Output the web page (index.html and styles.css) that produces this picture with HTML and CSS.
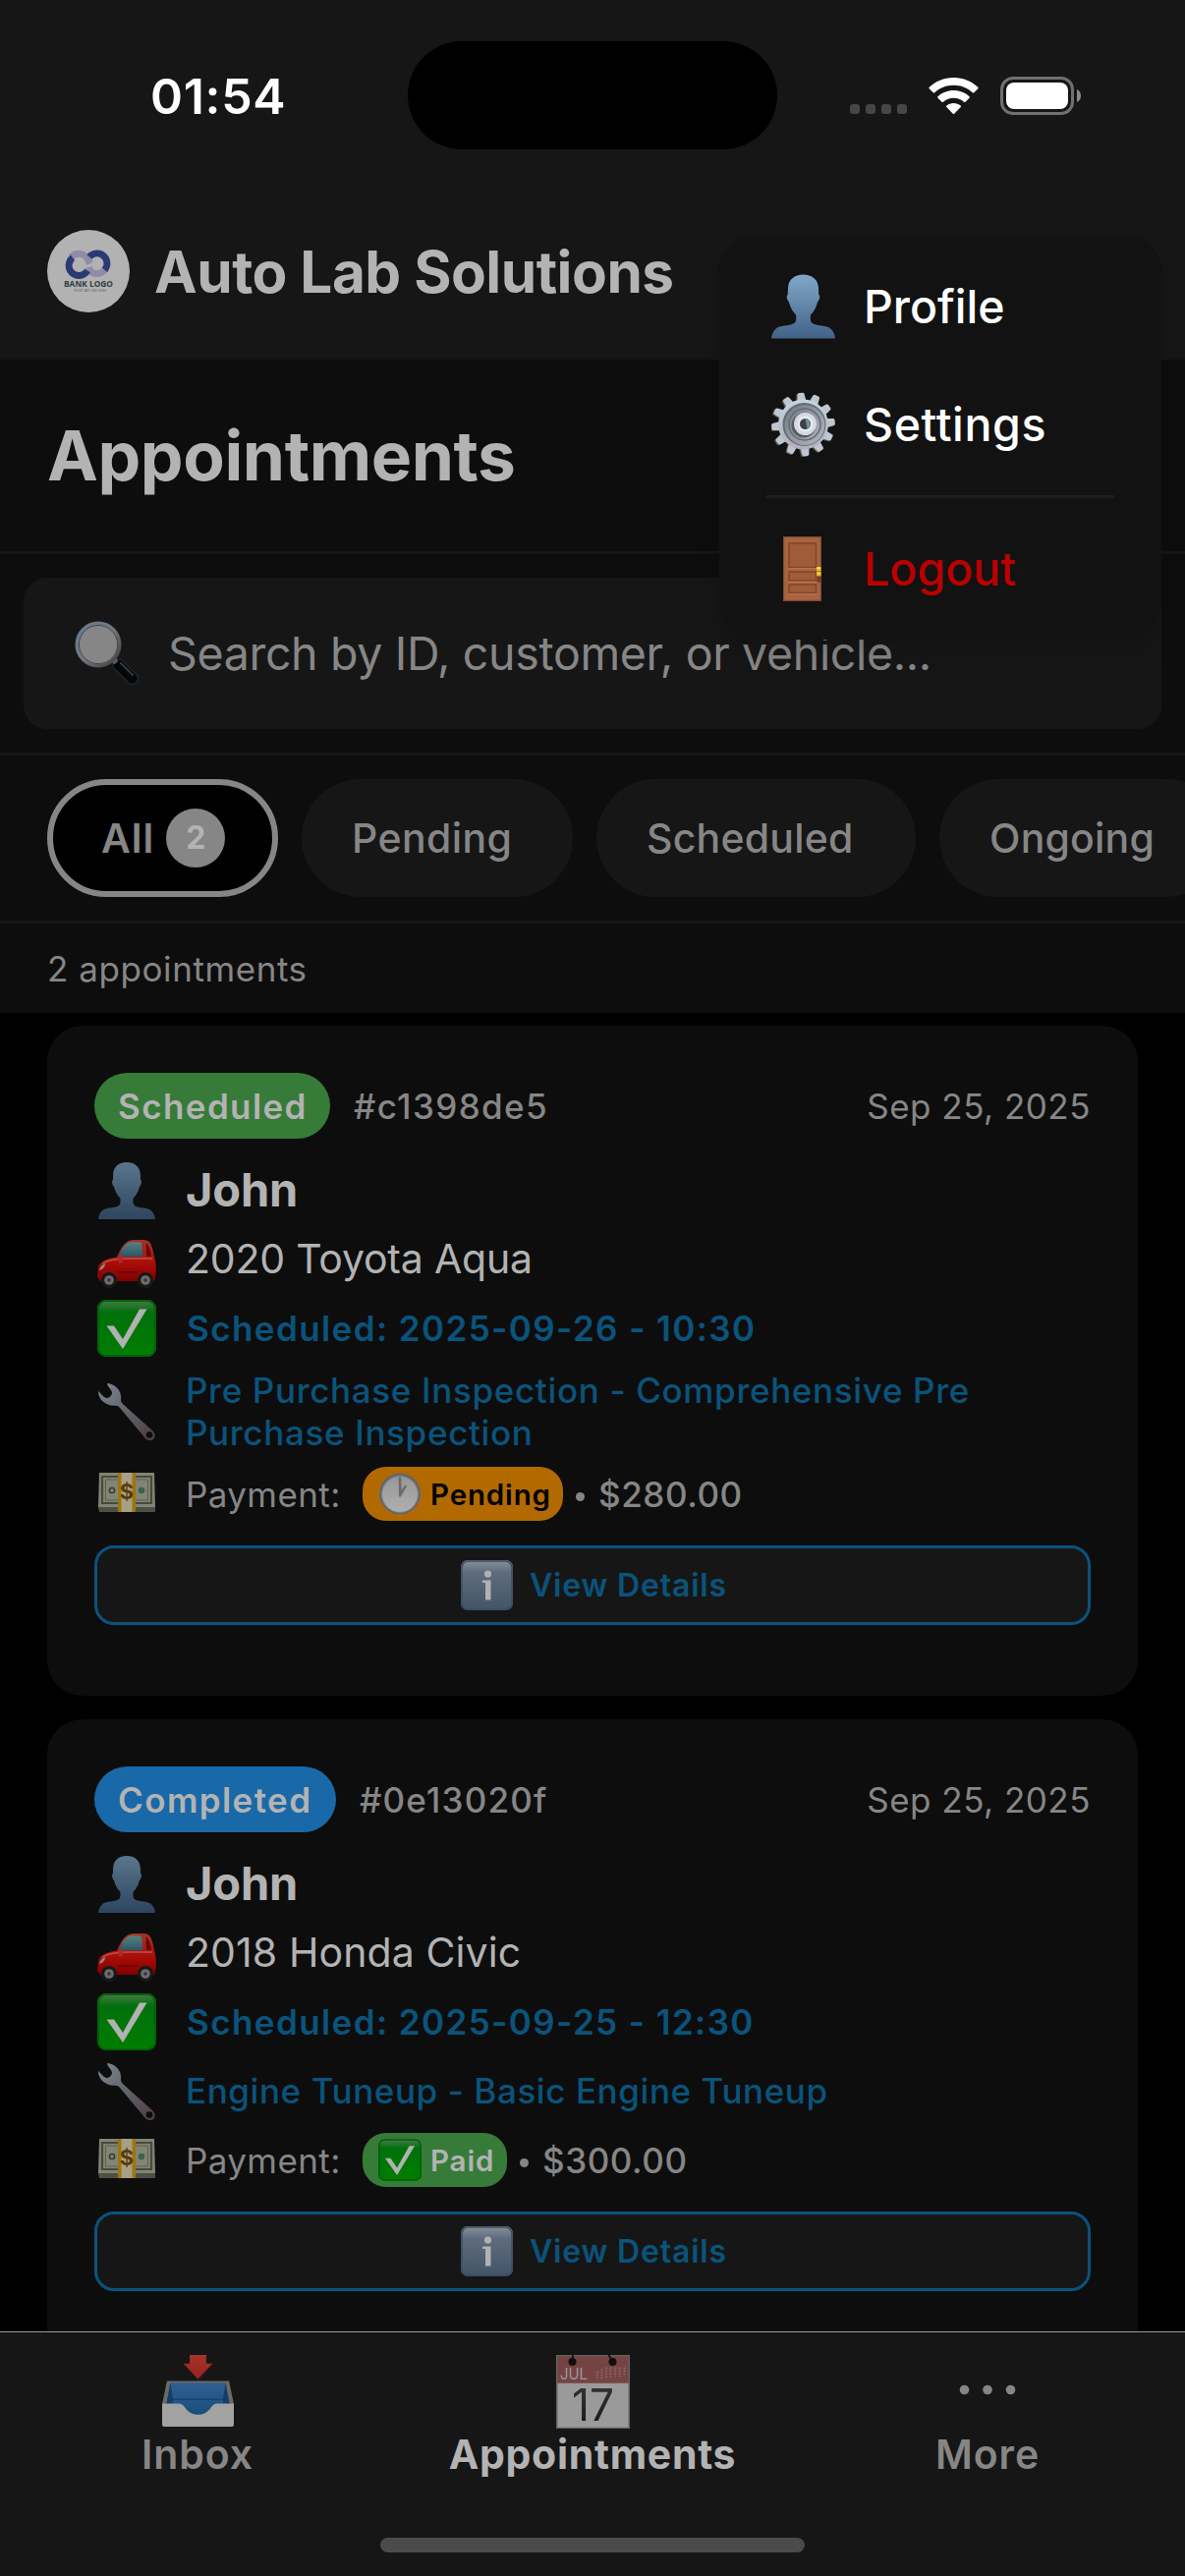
FILE: index.html
```html
<!DOCTYPE html>
<html lang="en">
<head>
<meta charset="utf-8">
<title>Auto Lab Solutions</title>
<link rel="stylesheet" href="styles.css">
</head>
<body>
<svg class="sprite" aria-hidden="true">
  <defs>
    <linearGradient id="g-person" x1="0" y1="0" x2="0" y2="1"><stop offset="0" stop-color="#80a8c8"/><stop offset="1" stop-color="#426288"/></linearGradient>
    <linearGradient id="g-gear" x1="0" y1="0" x2="0" y2="1"><stop offset="0" stop-color="#c6d3de"/><stop offset="1" stop-color="#b3aebb"/></linearGradient>
    <linearGradient id="g-gear-in" x1="0" y1="0" x2="1" y2="1"><stop offset="0" stop-color="#6f7880"/><stop offset="1" stop-color="#b4b9c2"/></linearGradient>
    <linearGradient id="g-check" x1="0" y1="0" x2="0" y2="1"><stop offset="0" stop-color="#6fae6f"/><stop offset=".22" stop-color="#00a010"/><stop offset="1" stop-color="#00b400"/></linearGradient>
    <linearGradient id="g-info" x1="0" y1="0" x2="0" y2="1"><stop offset="0" stop-color="#c2ccd8"/><stop offset=".25" stop-color="#8799b5"/><stop offset="1" stop-color="#5f7893"/></linearGradient>
    <linearGradient id="g-wrench" x1="0" y1="0" x2="1" y2="1"><stop offset="0" stop-color="#b2bfcd"/><stop offset=".5" stop-color="#8b8c98"/><stop offset="1" stop-color="#6a5558"/></linearGradient>
    <linearGradient id="g-car" x1="0" y1="0" x2="0" y2="1"><stop offset="0" stop-color="#e84a3c"/><stop offset=".5" stop-color="#fa1610"/><stop offset="1" stop-color="#b80000"/></linearGradient>
    <linearGradient id="g-glass" x1="0" y1="0" x2="0" y2="1"><stop offset="0" stop-color="#7db8b8"/><stop offset="1" stop-color="#3e7a92"/></linearGradient>
    <linearGradient id="g-rim" x1="0" y1="0" x2="1" y2="1"><stop offset="0" stop-color="#8fb2d6"/><stop offset=".5" stop-color="#a3a9b3"/><stop offset="1" stop-color="#5c4f4a"/></linearGradient>
    <linearGradient id="g-clock" x1="0" y1="0" x2="0" y2="1"><stop offset="0" stop-color="#d8d8d8"/><stop offset="1" stop-color="#fafafa"/></linearGradient>
    <linearGradient id="g-tray" x1="0" y1="0" x2="0" y2="1"><stop offset="0" stop-color="#4a88cf"/><stop offset="1" stop-color="#1c6cab"/></linearGradient>
    <linearGradient id="g-arrow" x1="0" y1="0" x2="0" y2="1"><stop offset="0" stop-color="#ee4b3e"/><stop offset="1" stop-color="#d53128"/></linearGradient>
    <linearGradient id="g-ink" x1="0" y1="0" x2="0" y2="1"><stop offset="0" stop-color="#505050"/><stop offset="1" stop-color="#1e1e1e"/></linearGradient>
  </defs>

  <symbol id="i-person" viewBox="0 0 65 65">
    <path fill="url(#g-person)" d="M32.500 0C41 0 48 5 48 14l.3 6.500c1.700.5 1 5.500-1.300 7.500-1.500 6-4 10-7 13-.5 3-.5 6.500 1 8 4 3.500 11.500 2 18 5 4 3 5.500 6.500 6 11H0c.5-4.500 2-8 6-11 6.500-3 14-1.500 18-5 1.500-1.500 1.500-5 1-8-3-3-5.500-7-7-13-2.300-2-3-7-1.300-7.500L17 14C17 5 24 0 32.500 0z"/>
  </symbol>

  <symbol id="i-gear" viewBox="0 0 65 65">
    <g fill="#5d5648" transform="translate(-1.300 .8)">
      <path id="tooth" d="M28.500 9l.8-7.500Q29.500.2 31 .2h3.500q1.500 0 1.800 1.300L37.500 9z" transform="rotate(-5 32.500 32.500)"/>
      <use href="#tooth" transform="rotate(30 32.500 32.500)"/><use href="#tooth" transform="rotate(60 32.500 32.500)"/><use href="#tooth" transform="rotate(90 32.500 32.500)"/><use href="#tooth" transform="rotate(120 32.500 32.500)"/><use href="#tooth" transform="rotate(150 32.500 32.500)"/><use href="#tooth" transform="rotate(180 32.500 32.500)"/><use href="#tooth" transform="rotate(210 32.500 32.500)"/><use href="#tooth" transform="rotate(240 32.500 32.500)"/><use href="#tooth" transform="rotate(270 32.500 32.500)"/><use href="#tooth" transform="rotate(300 32.500 32.500)"/><use href="#tooth" transform="rotate(330 32.500 32.500)"/>
    </g>
    <g fill="#bcc7d2">
      <path id="tooth2" d="M28.500 9l.8-7.500Q29.500.2 31 .2h3.500q1.500 0 1.800 1.300L37.500 9z" transform="rotate(-5 32.500 32.500)"/>
      <use href="#tooth2" transform="rotate(30 32.500 32.500)"/><use href="#tooth2" transform="rotate(60 32.500 32.500)"/><use href="#tooth2" transform="rotate(90 32.500 32.500)"/><use href="#tooth2" transform="rotate(120 32.500 32.500)"/><use href="#tooth2" transform="rotate(150 32.500 32.500)"/><use href="#tooth2" transform="rotate(180 32.500 32.500)"/><use href="#tooth2" transform="rotate(210 32.500 32.500)"/><use href="#tooth2" transform="rotate(240 32.500 32.500)"/><use href="#tooth2" transform="rotate(270 32.500 32.500)"/><use href="#tooth2" transform="rotate(300 32.500 32.500)"/><use href="#tooth2" transform="rotate(330 32.500 32.500)"/>
    </g>
    <circle cx="32.500" cy="32.500" r="25.500" fill="url(#g-gear)"/>
    <circle cx="33.500" cy="32.500" r="22" fill="#626a72"/>
    <circle cx="34" cy="33" r="20.500" fill="url(#g-gear-in)"/>
    <circle cx="34" cy="32.500" r="16" fill="none" stroke="#646b73" stroke-width="1.500"/>
    <circle cx="33" cy="33.500" r="12.500" fill="#5c5a60"/>
    <circle cx="34.500" cy="32" r="11.500" fill="#d3d8e2"/>
    <circle cx="34.500" cy="32" r="8" fill="#e6ebf2"/>
    <circle cx="34.500" cy="32" r="5.500" fill="#3b4248"/>
    <path d="M34.500 26.500a5.500 5.500 0 0 1 2 10.500z" fill="#778b94"/>
  </symbol>

  <symbol id="i-door" viewBox="0 0 39 66">
    <path fill="#a86341" d="M0 0h39v66H0z"/>
    <path fill="none" stroke="#824a2d" stroke-width="1.200" d="M.6.600h37.800v64.800H.6z"/>
    <path fill="#a05b39" stroke="#7f452a" stroke-width="1.400" d="M6 7h27.500v24.500H6zM6 36h27.500v9H6zM6 49h27.500v8.500H6z"/>
    <path stroke="#c27a55" stroke-width="1" d="M5 32.800h29.500M5 46.300h29.500M5 58.800h29.500" fill="none"/>
    <path fill="#6e3d22" d="M34.500 40.500h4v6h-4z"/>
    <path fill="#e8b923" d="M34 31h4.600v4.300H34zM34 36.300h4.600v3.900H34z"/>
    <path fill="#ffe75a" d="M34.500 31.500h3v1.500h-3zM34.500 36.800h3v1.300h-3z"/>
  </symbol>

  <symbol id="i-search" viewBox="0 0 66 66">
    <path stroke="#35404b" stroke-width="12.500" stroke-linecap="round" d="M44.500 44.500l14 14"/>
    <path stroke="#05080b" stroke-width="10.500" stroke-linecap="round" d="M44.500 44.500l14 14"/>
    <path stroke="#46505a" stroke-width="2.200" stroke-linecap="round" d="M47 43l12 12"/>
    <path stroke="#8a8078" stroke-width="6" d="M38.500 38.500l4 4"/>
    <circle cx="24" cy="24" r="21.800" fill="#c0c0c0" stroke="url(#g-rim)" stroke-width="3.400"/>
    <circle cx="24" cy="24" r="19.600" fill="none" stroke="#5a616b" stroke-width="1"/>
  </symbol>

  <symbol id="i-car" viewBox="0 0 60 50">
    <path fill="#1c1c1c" d="M2 38h56v5H2z"/>
    <path fill="url(#g-car)" d="M1 29C2 24 8 20 20 18.500 24 9 28 2 36 1h11c6 0 8 4 9.500 10l2 9c1.500 5 1.500 13 1 17l-1.500 6H3L0 39z"/>
    <path fill="url(#g-glass)" d="M22 18C25 9 29 3.500 35 3.200h8c2 0 2.500 2 2.800 6l.2 9z"/>
    <path fill="#8e0c0a" d="M49.500 4c3 2 5 9 5.500 14l-5-.5z"/>
    <path fill="none" stroke="#ff7a68" stroke-width="1.300" d="M5 25c8-4.500 16-5 26-5h25"/>
    <path fill="none" stroke="#7c0000" stroke-width="1.200" d="M21 34h20"/>
    <path fill="#c7c3bd" d="M2 32c1-4 3-6 6-7 0 3-2 6-6 7z"/>
    <path fill="#ff3b30" d="M21 17.500h5v7h-4z"/>
    <circle cx="12" cy="42" r="8" fill="#232323"/><circle cx="12" cy="42" r="4.800" fill="#9a9a9f"/><circle cx="12" cy="42" r="1.800" fill="#4a4a4e"/>
    <circle cx="49" cy="42" r="8" fill="#232323"/><circle cx="49" cy="42" r="4.800" fill="#9a9a9f"/><circle cx="49" cy="42" r="1.800" fill="#4a4a4e"/>
  </symbol>

  <symbol id="i-check" viewBox="0 0 60 58">
    <rect width="60" height="58" rx="9" fill="url(#g-check)"/>
    <rect x="1" y="1" width="58" height="56" rx="8" fill="none" stroke="#008a0c" stroke-width="2"/>
    <path fill="#fdfdfd" d="M9.500 26.500h7.500l9 13.500L43 9.500h7.500L26 50z"/>
  </symbol>

  <symbol id="i-wrench" viewBox="0 0 58 58">
    <path fill="url(#g-wrench)" d="M9 0c9 1 15 8 14 16-.2 2 .5 3.500 2 5L55.500 48.500c4 4.500 2 9.500-2.500 9.500-2 .2-4-.8-5.500-2.500L22 25c-1.500-1.800-3-2.500-5-2.300C8 23 0 17 0 8c3 2.500 5 6.500 9 7 3-.3 5-3 5-5.500C13.500 6 9 3.500 9 0z"/>
    <circle cx="52" cy="52.500" r="3.300" fill="#111"/>
  </symbol>

  <symbol id="i-note" viewBox="0 0 58 40">
    <path fill="#b9bda5" d="M1 0h56l1 36H0z"/>
    <path fill="#6e7361" d="M0 35h58v5H1z"/>
    <path fill="none" stroke="#666b58" stroke-width="2.200" d="M4 4h50v27H4z"/>
    <path fill="none" stroke="#858a72" stroke-width="1" d="M7.500 7h43v21h-43z"/>
    <circle cx="14" cy="18" r="2.600" fill="none" stroke="#444a3c" stroke-width="1.400"/>
    <circle cx="44" cy="18" r="3.300" fill="#4f8f6a"/>
    <path fill="#ece4c0" d="M20 0h18v40H20z"/>
    <path fill="#e3a70e" d="M20 0h3.500v40H20zM34.500 0H38v40h-3.500z"/>
  </symbol>

  <symbol id="i-clock" viewBox="0 0 44 44">
    <circle cx="22" cy="22" r="21.500" fill="#8d929a"/>
    <circle cx="22" cy="22.500" r="18.800" fill="url(#g-clock)" stroke="#b8bcc2" stroke-width="1"/>
    <path fill="#9a9a9a" d="M20.600 4.500h2.800l.3 13.500 4-5.500 1.500 1.200L23 25h-2z"/>
  </symbol>

  <symbol id="i-info" viewBox="0 0 53 51">
    <rect width="53" height="51" rx="7" fill="url(#g-info)"/>
    <rect x="1" y="1" width="51" height="49" rx="6.500" fill="none" stroke="#566e8c" stroke-width="1.600"/>
    <circle cx="27.500" cy="14" r="3.600" fill="#fdfdfd"/>
    <path fill="#fdfdfd" d="M22 20.500h8.500V40.500h-5.500V23H22z"/>
  </symbol>
</svg>

<main class="screen">
  <header class="topbar">
    <div class="status">
      <span class="status-time">01:54</span>
      <span class="island"></span>
      <span class="status-icons">
        <svg class="signal" viewBox="0 0 58 10" fill="#464646"><rect width="10" height="10" rx="3"/><rect x="16" width="10" height="10" rx="3"/><rect x="32" width="10" height="10" rx="3"/><rect x="48" width="10" height="10" rx="3"/></svg>
        <svg class="wifi" viewBox="0 0 51 38" fill="#fff"><path d="M25.500 0C35.500 0 44 3.800 50.300 9.800q.7.700 0 1.400l-4 4q-.7.700-1.500 0C39.500 10.500 33 7.800 25.500 7.800S11.500 10.500 6.200 15.200q-.8.700-1.500 0l-4-4q-.7-.7 0-1.400C7 3.800 15.500 0 25.500 0z"/><path d="M25.500 13c6.200 0 11.800 2.300 16 6.200q.8.700 0 1.500l-4 4q-.7.700-1.500 0c-2.900-2.500-6.500-3.900-10.500-3.900s-7.600 1.400-10.500 3.900q-.8.700-1.500 0l-4-4q-.8-.8 0-1.500c4.200-3.900 9.800-6.200 16-6.200z"/><path d="M25.500 26c2.700 0 5.200 1 7.200 2.600q.8.700 0 1.500l-6.500 6.600q-.7.700-1.400 0l-6.500-6.600q-.8-.8 0-1.500c2-1.600 4.500-2.600 7.200-2.600z"/></svg>
        <svg class="battery" viewBox="0 0 82 39"><rect x="1.500" y="1.500" width="72" height="36" rx="11.500" fill="none" stroke="#707070" stroke-width="3"/><rect x="6" y="6" width="63" height="27" rx="8" fill="#fff"/><path fill="#8a8a8a" d="M78 13c2.500 1 4 3.500 4 6.500S80.500 25 78 26z"/></svg>
      </span>
    </div>
    <div class="brand">
      <svg class="logo" viewBox="0 0 84 84">
        <circle cx="42" cy="42" r="42" fill="#b2b2b2"/>
        <g fill="none" stroke-width="6.800">
          <path stroke="#8f8ba8" d="M24.500 27.800a10.200 10.200 0 0 1 17 2.500l2 4"/>
          <path stroke="#8f8ba8" d="M42 38c1.500 5 4.500 6.700 8.500 6.700 4 0 7-2 9-5"/>
          <path stroke="#2b3a73" d="M26 28.200a10.200 10.200 0 1 0 15 13.300"/>
          <path stroke="#2b3a73" d="M43 27.500a10.200 10.200 0 1 1 15.500 13.300"/>
        </g>
        <text x="17" y="58.300" font-family="'Open Sans', sans-serif" font-weight="700" font-size="8.800" textLength="50" lengthAdjust="spacingAndGlyphs" fill="#2e3c44">BANK LOGO</text>
        <text x="27" y="63.200" font-family="'Open Sans', sans-serif" font-style="italic" font-size="4" textLength="33" lengthAdjust="spacingAndGlyphs" fill="#55606a">YOUR TAG LINE HERE</text>
      </svg>
      <span class="brand-name">Auto Lab Solutions</span>
    </div>
  </header>

  <section class="heading"><h1>Appointments</h1></section>

  <section class="search-wrap">
    <div class="search">
      <svg class="search-icon dim"><use href="#i-search"/></svg>
      <span class="search-text">Search by ID, customer, or vehicle...</span>
    </div>
  </section>

  <nav class="filters">
    <button class="chip chip-active"><span>All</span><b class="chip-count">2</b></button>
    <button class="chip chip-pending">Pending</button>
    <button class="chip chip-scheduled">Scheduled</button>
    <button class="chip chip-ongoing">Ongoing</button>
  </nav>

  <p class="count">2 appointments</p>

  <section class="list">
    <article class="card">
      <div class="card-head">
        <span class="badge badge-scheduled">Scheduled</span>
        <span class="card-id">#c1398de5</span>
        <span class="card-date">Sep 25, 2025</span>
      </div>
      <div class="row row-name"><svg class="ic ic-person dim"><use href="#i-person"/></svg><span class="name">John</span></div>
      <div class="row row-car"><svg class="ic ic-car dim"><use href="#i-car"/></svg><span class="vehicle">2020 Toyota Aqua</span></div>
      <div class="row row-time"><svg class="ic ic-check dim"><use href="#i-check"/></svg><span class="time">Scheduled: 2025-09-26 - 10:30</span></div>
      <div class="row row-service row-service-tall"><svg class="ic ic-wrench dim"><use href="#i-wrench"/></svg><span class="service">Pre Purchase Inspection - Comprehensive Pre<br>Purchase Inspection</span></div>
      <div class="row row-pay"><svg class="ic ic-money dim" viewBox="0 0 58 40"><use href="#i-note" width="58" height="40"/><text class="dollar" x="29" y="27">$</text></svg><span class="pay-label">Payment:</span><span class="pill pill-pending"><svg class="pill-ic dim"><use href="#i-clock"/></svg>Pending</span><i class="dot"></i><span class="amount">$280.00</span></div>
      <button class="details"><svg class="info dim"><use href="#i-info"/></svg>View Details</button>
    </article>

    <article class="card">
      <div class="card-head">
        <span class="badge badge-completed">Completed</span>
        <span class="card-id card-id-alt">#0e13020f</span>
        <span class="card-date">Sep 25, 2025</span>
      </div>
      <div class="row row-name"><svg class="ic ic-person dim"><use href="#i-person"/></svg><span class="name">John</span></div>
      <div class="row row-car"><svg class="ic ic-car dim"><use href="#i-car"/></svg><span class="vehicle vehicle-alt">2018 Honda Civic</span></div>
      <div class="row row-time"><svg class="ic ic-check dim"><use href="#i-check"/></svg><span class="time">Scheduled: 2025-09-25 - 12:30</span></div>
      <div class="row row-service"><svg class="ic ic-wrench dim"><use href="#i-wrench"/></svg><span class="service service-alt">Engine Tuneup - Basic Engine Tuneup</span></div>
      <div class="row row-pay"><svg class="ic ic-money dim" viewBox="0 0 58 40"><use href="#i-note" width="58" height="40"/><text class="dollar" x="29" y="27">$</text></svg><span class="pay-label">Payment:</span><span class="pill pill-paid"><svg class="pill-ic dim"><use href="#i-check"/></svg>Paid</span><i class="dot"></i><span class="amount">$300.00</span></div>
      <button class="details"><svg class="info dim"><use href="#i-info"/></svg>View Details</button>
    </article>
  </section>

  <footer class="tabs">
    <div class="tab-row">
      <a class="tab">
        <svg class="tab-inbox dim" viewBox="0 0 74 84" preserveAspectRatio="none">
          <path fill="url(#g-arrow)" d="M28.500 0h17v10h6.500L37 28.500 22 10h6.500z"/>
          <path fill="#9a978f" d="M5 30.500h64l5 27H0z"/>
          <path fill="url(#g-tray)" d="M8.500 32.500h57L70 60v15H4V60z"/>
          <path fill="#1a5a94" d="M8.500 32.500L4 60h7V50zM65.500 32.500L70 60h-7V50z"/>
          <path fill="none" stroke="#14548c" stroke-width="1" d="M10 52h54"/>
          <path fill="#e8e7e4" d="M0 57h16c5 0 6 2 9 7 6 8 18 8 24 0 3-5 4-7 9-7h16v24q0 3-3 3H3q-3 0-3-3z"/>
        </svg>
        <span>Inbox</span>
      </a>
      <a class="tab tab-active">
        <svg class="tab-cal dim" viewBox="0 0 75 86" preserveAspectRatio="none">
          <path fill="#dcdcdc" d="M0 0h75v86H0z"/>
          <path fill="#a86060" d="M0 0h75v33H0z"/>
          <path fill="none" stroke="#8a8a8a" stroke-width="1.500" d="M.7.700h73.600v84.600H.7z"/>
          <g fill="#161616"><ellipse cx="16.500" cy="8" rx="4" ry="4.700"/><ellipse cx="57.500" cy="8" rx="4" ry="4.700"/><path d="M16 0h1.800v7H16zM52.500 0h2l3.500 6-1.500 1.500z"/></g>
          <text x="4" y="28.500" font-size="19" textLength="28" lengthAdjust="spacingAndGlyphs" fill="#e0d6d6">JUL</text>
          <path fill="none" stroke="#c99a9a" stroke-width="1.800" stroke-dasharray="1.800 1.500" d="M42 19v9M46.500 16v12M51 14.500v13.500M55.500 14.500v13.500M60 14.500v11M64.500 14.500v11M69.500 14.500v10"/>
          <text x="37.500" y="77" text-anchor="middle" font-size="51" textLength="43" lengthAdjust="spacingAndGlyphs" fill="url(#g-ink)">17</text>
        </svg>
        <span>Appointments</span>
      </a>
      <a class="tab"><svg class="tab-more" viewBox="0 0 58 75" fill="#868686"><circle cx="5.500" cy="35.500" r="4.800"/><circle cx="29" cy="35.500" r="4.800"/><circle cx="52.500" cy="35.500" r="4.800"/></svg><span>More</span></a>
    </div>
    <div class="home"></div>
  </footer>

  <aside class="menu">
    <a class="menu-item"><svg class="menu-ic"><use href="#i-person"/></svg><span>Profile</span></a>
    <a class="menu-item"><svg class="menu-ic"><use href="#i-gear"/></svg><span class="m-settings">Settings</span></a>
    <hr>
    <a class="menu-item menu-logout"><svg class="menu-ic"><use href="#i-door"/></svg><span>Logout</span></a>
  </aside>
</main>
</body>
</html>
```
FILE: styles.css
```css
* { box-sizing: border-box; }
body {
  margin: 0;
  background: #000;
  color: #b3b3b3;
  font-family: Inter, "Noto Sans", sans-serif;
  -webkit-font-smoothing: antialiased;
}
.sprite { position: absolute; width: 0; height: 0; overflow: hidden; }
.dim { filter: brightness(.7); }
svg { display: block; flex: none; }
span { white-space: nowrap; }
button { font-family: inherit; border: 0; padding: 0; }

.screen {
  position: relative;
  width: 1206px;
  height: 2622px;
  overflow: hidden;
  display: flex;
  flex-direction: column;
}

/* status bar and brand */
.topbar { height: 366px; background: #161616; }
.status {
  display: grid;
  grid-template-columns: 415px 376px 415px;
  height: 234px;
  padding-top: 42px;
  align-items: start;
}
.status-time {
  padding-left: 153px;
  color: #fff;
  font-size: 50px;
  font-weight: 600;
  letter-spacing: .7px;
  line-height: 112px;
}
.island { height: 110px; border-radius: 55px; background: #000; }
.status-icons { display: flex; padding: 37px 0 0 74px; }
.signal { width: 58px; height: 10px; margin-top: 27px; }
.wifi { width: 51px; height: 38px; margin-left: 22px; }
.battery { width: 82px; height: 39px; margin: -1px 0 0 22px; }
.brand { display: flex; align-items: center; height: 84px; padding-left: 48px; }
.logo { width: 84px; height: 84px; }
.brand-name {
  margin-left: 25px;
  padding-top: 1px;
  font-size: 58.5px;
  font-weight: 700;
  letter-spacing: -.48px;
}

.heading {
  height: 198px;
  background: #0d0d0d;
  border-bottom: 3px solid #161616;
  padding-left: 48px;
}
h1 {
  margin: 0;
  font-size: 69.5px;
  font-weight: 700;
  line-height: 196px;
  letter-spacing: -.43px;
}

.search-wrap {
  height: 205px;
  padding: 24px 24px 0;
  background: #0d0d0d;
  border-bottom: 3px solid #161616;
}
.search {
  display: flex;
  align-items: center;
  height: 154px;
  padding-left: 52px;
  border-radius: 24px;
  background: #161616;
  color: #868686;
}
.search-icon { width: 66px; height: 66px; }
.search-text { margin-left: 29px; font-size: 46.5px; letter-spacing: -.34px; }

/* filter chips */
.filters {
  display: flex;
  gap: 24px;
  height: 171px;
  padding: 24px 0 0 48px;
  overflow: hidden;
  background: #0d0d0d;
  border-bottom: 3px solid #161616;
}
.chip {
  flex: none;
  height: 120px;
  border-radius: 60px;
  background: #161616;
  color: #868686;
  font-size: 41px;
  font-weight: 500;
  line-height: 118px;
  text-align: left;
  padding-left: 50px;
}
.chip-active {
  display: flex;
  align-items: center;
  width: 235px;
  border: 6px solid #868686;
  background: #000;
  font-weight: 600;
  line-height: 106px;
  letter-spacing: 1px;
  padding-left: 49px;
}
.chip-count {
  width: 60px;
  height: 60px;
  margin-left: 12px;
  border-radius: 50%;
  background: #868686;
  color: #b3b3b3;
  font-size: 32px;
  font-weight: 700;
  line-height: 60px;
  letter-spacing: 0;
  text-align: center;
}
.chip-pending { width: 276px; letter-spacing: .4px; padding-left: 51px; }
.chip-scheduled { width: 325px; letter-spacing: .21px; padding-left: 51px; }
.chip-ongoing { width: 292px; letter-spacing: .2px; padding-left: 51px; }

.count {
  margin: 0;
  height: 91px;
  padding-left: 48px;
  background: #0d0d0d;
  color: #868686;
  font-size: 35px;
  line-height: 92px;
  letter-spacing: .57px;
}

/* appointment cards */
.list { flex: 1; min-height: 0; overflow: hidden; padding: 13px 48px 0; }
.card {
  padding: 48px 48px 72px;
  margin-bottom: 24px;
  border-radius: 36px;
  background: #0d0d0d;
  font-size: 35px;
}
.card-head { display: flex; align-items: center; height: 67px; margin-bottom: 18px; }
.badge {
  height: 67px;
  padding: 0 24px;
  border-radius: 34px;
  font-weight: 600;
  line-height: 68px;
  letter-spacing: 1.4px;
}
.badge-scheduled { width: 240px; background: #377b39; }
.badge-completed { width: 246px; background: #1969a9; }
.card-id { margin-left: 24px; color: #868686; font-weight: 500; letter-spacing: 1.35px; }
.card-id-alt { letter-spacing: 1.18px; }
.card-date { margin-left: auto; color: #868686; letter-spacing: .5px; }
.row { display: flex; align-items: center; padding-left: 3px; }
.row-name { height: 70px; }
.row-car { height: 69px; }
.row-time { height: 72px; }
.row-service { height: 69px; }
.row-service-tall { height: 97px; }
.row-pay { height: 71px; color: #868686; }
.ic { width: 60px; height: 58px; margin-right: 30px; }
.ic-car { height: 50px; margin-top: 9px; }
.ic-money { height: 40px; margin-top: -3px; }
.dollar { font-size: 22px; font-weight: 700; text-anchor: middle; fill: #7a5512; }
.name { font-size: 47px; font-weight: 700; letter-spacing: -.18px; line-height: 54px; padding-bottom: 2px; }
.vehicle { font-size: 41px; letter-spacing: -.2px; padding-bottom: 2px; }
.vehicle-alt { letter-spacing: .1px; }
.time { margin-left: 1px; color: #0a537b; font-weight: 600; letter-spacing: 1.41px; }
.service { color: #0a537b; font-weight: 500; line-height: 43px; letter-spacing: .66px; }
.service-alt { letter-spacing: .58px; }
.pay-label { width: 180px; letter-spacing: .4px; }
.pill {
  display: flex;
  align-items: center;
  height: 55px;
  padding: 0 14px 0 16px;
  border-radius: 24px;
  font-size: 29.5px;
  font-weight: 600;
  letter-spacing: .85px;
}
.pill-ic { width: 44px; height: 43px; margin-right: 9px; }
.pill-pending { width: 204px; background: #b26a00; color: #000; }
.pill-paid { width: 147px; background: #377b39; color: #b3b3b3; }
.dot { width: 9px; height: 9px; margin: 5px 14px 0 13px; border-radius: 50%; background: #868686; }
.amount { font-weight: 500; letter-spacing: .57px; }
.details {
  display: flex;
  align-items: center;
  width: 100%;
  height: 81px;
  margin-top: 17px;
  padding-left: 370px;
  border: 3px solid #0a537b;
  border-radius: 20px;
  background: #161616;
  color: #0a537b;
  font-size: 32px;
  font-weight: 600;
  letter-spacing: .81px;
}
.info { width: 53px; height: 51px; margin-right: 17px; }

/* bottom tabs */
.tabs { height: 249px; background: #161616; border-top: 1px solid #999; }
.tab-row { display: grid; grid-template-columns: repeat(3, 1fr); height: 209px; }
.tab {
  display: flex;
  flex-direction: column;
  align-items: center;
  padding-top: 23px;
  color: #868686;
  font-size: 41px;
  font-weight: 600;
  letter-spacing: .95px;
  line-height: 50px;
}
.tab svg { height: 75px; overflow: visible; font-weight: 400; letter-spacing: 0; }
.tab span { margin-top: 1px; }
.tab-active { color: #b3b3b3; font-weight: 700; letter-spacing: .7px; }
.tab .tab-inbox { width: 73px; height: 73px; margin-bottom: 2px; }
.tab-cal { width: 75px; }
.tab-more { width: 58px; }
.home { width: 432px; height: 15px; margin: 0 auto; border-radius: 8px; background: #4b4b4b; }

/* account menu over the page */
.menu {
  position: absolute;
  top: 240px;
  left: 732px;
  width: 450px;
  height: 411px;
  padding: 12px 48px 0;
  border-radius: 36px;
  background: #121212;
  box-shadow: 0 12px 24px rgba(0, 0, 0, .14);
  color: #fff;
  font-size: 46.5px;
  font-weight: 500;
}
.menu-item { display: flex; align-items: center; height: 120px; padding-left: 5px; }
.menu-ic { width: 65px; height: 66px; margin-right: 29px; }
.m-settings { letter-spacing: .6px; }
.menu hr { height: 3px; margin: 12px 0; border: 0; background: #1f1f1f; }
.menu-logout { color: #b90000; padding-left: 4px; }
.menu-logout .menu-ic { margin-right: 30px; }
```
